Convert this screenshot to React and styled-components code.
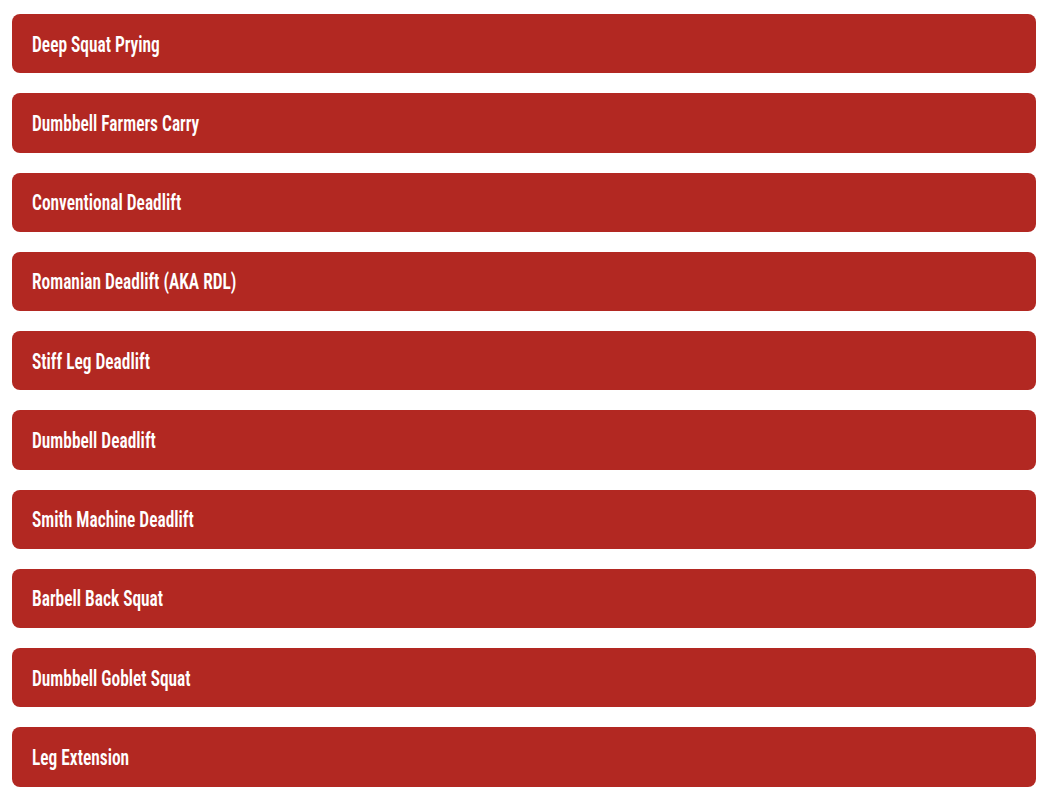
import React from "react";
import styled, { createGlobalStyle } from "styled-components";

const GlobalStyle = createGlobalStyle`
  html, body { margin: 0; padding: 0; background: #ffffff; }
  body { font-family: Roboto, "Liberation Sans", sans-serif; }
`;

const List = styled.div`
  display: flex;
  flex-direction: column;
  gap: 20px;
  padding: 14px 9px 8px 12px;
`;

const Item = styled.div`
  box-sizing: border-box;
  height: 59.25px;
  display: flex;
  align-items: center;
  padding: 0 20px;
  background: #b22822;
  border-radius: 8px;
  cursor: pointer;
`;

const Label = styled.span`
  display: inline-block;
  font-family: Roboto, "Liberation Sans", sans-serif;
  font-stretch: condensed;
  font-weight: 600;
  font-size: 22px;
  line-height: 1;
  color: #ffffff;
  transform: scaleX(0.79);
  transform-origin: left center;
  white-space: nowrap;
  margin-top: 2px;
`;

const exercises = [
  "Deep Squat Prying",
  "Dumbbell Farmers Carry",
  "Conventional Deadlift",
  "Romanian Deadlift (AKA RDL)",
  "Stiff Leg Deadlift",
  "Dumbbell Deadlift",
  "Smith Machine Deadlift",
  "Barbell Back Squat",
  "Dumbbell Goblet Squat",
  "Leg Extension",
];

export default function App() {
  return (
    <>
      <GlobalStyle />
      <List>
        {exercises.map((name) => (
          <Item key={name}>
            <Label>{name}</Label>
          </Item>
        ))}
      </List>
    </>
  );
}
